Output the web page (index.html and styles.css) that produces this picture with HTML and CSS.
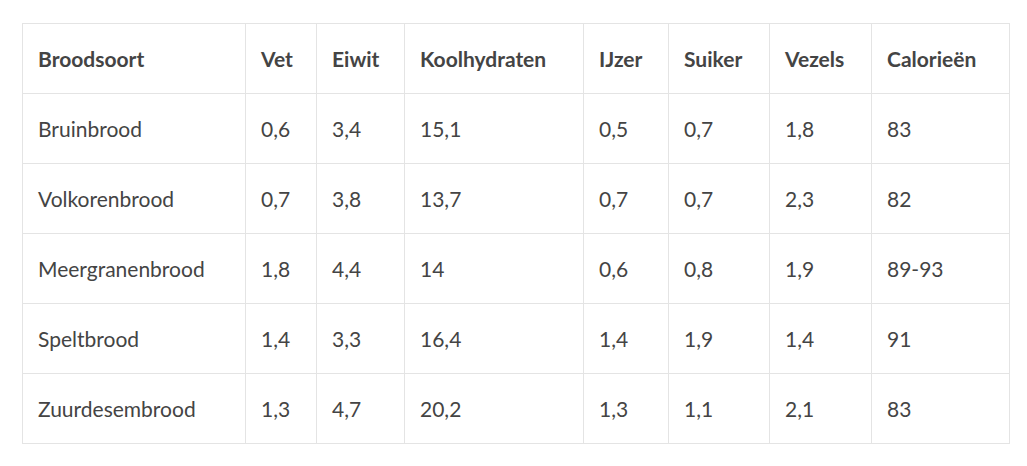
FILE: index.html
```html
<!DOCTYPE html>
<html lang="nl">
<head>
<meta charset="utf-8">
<link rel="stylesheet" href="styles.css">
</head>
<body>
<table class="nutri">
  <colgroup>
    <col class="c1"><col class="c2"><col class="c3"><col class="c4"><col class="c5"><col class="c6"><col class="c7"><col class="c8">
  </colgroup>
  <thead>
    <tr><th>Broodsoort</th><th>Vet</th><th>Eiwit</th><th>Koolhydraten</th><th>IJzer</th><th>Suiker</th><th>Vezels</th><th>Calorieën</th></tr>
  </thead>
  <tbody>
    <tr><td>Bruinbrood</td><td>0,6</td><td>3,4</td><td>15,1</td><td>0,5</td><td>0,7</td><td>1,8</td><td>83</td></tr>
    <tr><td>Volkorenbrood</td><td>0,7</td><td>3,8</td><td>13,7</td><td>0,7</td><td>0,7</td><td>2,3</td><td>82</td></tr>
    <tr><td>Meergranenbrood</td><td>1,8</td><td>4,4</td><td>14</td><td>0,6</td><td>0,8</td><td>1,9</td><td>89-93</td></tr>
    <tr><td>Speltbrood</td><td>1,4</td><td>3,3</td><td>16,4</td><td>1,4</td><td>1,9</td><td>1,4</td><td>91</td></tr>
    <tr><td>Zuurdesembrood</td><td>1,3</td><td>4,7</td><td>20,2</td><td>1,3</td><td>1,1</td><td>2,1</td><td>83</td></tr>
  </tbody>
</table>
</body>
</html>
```

FILE: styles.css
```css
html, body { margin: 0; padding: 0; background: #fff; }
body { padding: 23px 0 0 22px; font-family: Lato, "Noto Sans", sans-serif; color: #444; }
.nutri { border-collapse: collapse; table-layout: fixed; width: 987px; font-size: 21px; }
.nutri th, .nutri td { border: 1px solid #e4e4e4; height: 69px; padding: 0 0 0 15px; text-align: left; vertical-align: middle; }
.nutri th { font-weight: 700; }
.nutri td { font-weight: 400; }
.c1 { width: 223px; } .c2 { width: 71px; } .c3 { width: 88px; } .c4 { width: 179px; }
.c5 { width: 85px; } .c6 { width: 101px; } .c7 { width: 102px; } .c8 { width: 138px; }
```
